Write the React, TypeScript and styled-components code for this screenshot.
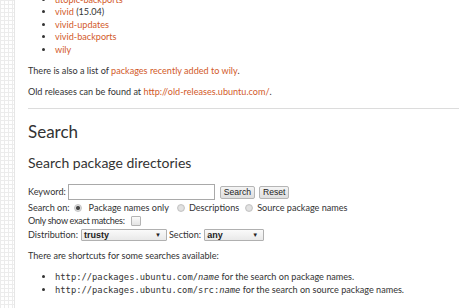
import React from "react";
import styled, { createGlobalStyle } from "styled-components";

const Global = createGlobalStyle`
  html, body { margin: 0; padding: 0; background: #fff; }
  body { font-family: Lato, "Open Sans", sans-serif; color: #333; overflow: hidden; }
`;

const Page = styled.div`
  display: flex;
  width: 459px;
  height: 308px;
  overflow: hidden;
`;

const Strip = styled.div`
  flex: 0 0 14px;
  border-right: 1px solid #e6e6e6;
  background-color: #fff;
  background-image:
    linear-gradient(to right, #ececec 1px, transparent 1px),
    linear-gradient(to bottom, #ececec 1px, transparent 1px);
  background-size: 4px 4px;
`;

const Main = styled.div`
  flex: 1;
  padding-left: 13px;
  margin-top: -6px;
  font-size: 9.1px;
  line-height: 12.4px;
`;

const List = styled.ul`
  margin: 0 0 9px 0;
  padding-left: 27px;
  list-style: disc;
`;

const Item = styled.li`
  line-height: 12.4px;
`;

const Link = styled.a`
  color: #d25a2a;
  text-decoration: none;
`;

const Para = styled.p`
  margin: 0 0 9px 0;
`;

const Rule = styled.hr`
  border: 0;
  border-top: 1px solid #dcdcdc;
  margin: 8px -20px 0 0;
`;

const H2 = styled.h2`
  font-weight: 400;
  font-size: 17px;
  line-height: 22px;
  margin: 12px 0 0 0;
  color: #333;
`;

const H3 = styled.h3`
  font-weight: 400;
  font-size: 14px;
  line-height: 18px;
  margin: 11px 0 0 0;
  color: #333;
`;

const Form = styled.form`
  margin-top: 12px;
  display: flex;
  flex-direction: column;
`;

const Row = styled.div<{ $h?: number }>`
  display: flex;
  align-items: center;
  height: ${(p) => p.$h ?? 14}px;
  white-space: nowrap;
`;

const Label = styled.span<{ $gap?: number; $tight?: boolean }>`
  margin-right: ${(p) => p.$gap ?? 2}px;
  letter-spacing: ${(p) => (p.$tight ? "-0.3px" : "0")};
`;

const TextInput = styled.input`
  width: 147px;
  height: 16px;
  box-sizing: border-box;
  border: 1px solid #a9a9a9;
  margin: 0 5px 0 0;
  padding: 0;
`;

const Button = styled.button`
  font-family: "Liberation Sans", Arial, sans-serif;
  font-size: 8.6px;
  height: 13px;
  padding: 0 3px;
  margin: 0 4px 0 0;
  border: 1px solid #b5b5b5;
  border-radius: 2px;
  background: linear-gradient(#f4f4f4, #dedede);
  color: #222;
  line-height: 11px;
`;

const Radio = styled.span<{ $on?: boolean; $ml: number; $mr: number }>`
  display: inline-block;
  width: 8px;
  height: 8px;
  border-radius: 50%;
  margin: 0 ${(p) => p.$mr}px 0 ${(p) => p.$ml}px;
  background: radial-gradient(circle, ${(p) => (p.$on ? "#444 0 1.5px, #ddd 2.5px" : "#e2e2e2 0 2px, #cfcfcf 4px")});
  border: 1px solid #c4c4c4;
  box-sizing: border-box;
`;

const Check = styled.span`
  display: inline-block;
  width: 8px;
  height: 8px;
  border: 1px solid #b4b4b4;
  border-radius: 1px;
  background: linear-gradient(#fbfbfb, #e4e4e4);
  margin-left: 4px;
`;

const Select = styled.span<{ $w: number }>`
  display: inline-flex;
  align-items: center;
  justify-content: space-between;
  box-sizing: border-box;
  width: ${(p) => p.$w}px;
  height: 12px;
  padding: 0 5px 0 2px;
  border: 1px solid #b0b0b0;
  border-radius: 1px;
  background: linear-gradient(#fafafa, #e9e9e9);
  font-family: "Liberation Sans", Arial, sans-serif;
  font-size: 9px;
  font-weight: bold;
  color: #222;
  margin: 0 2px 0 1px;
`;

const Arrow = styled.span`
  font-size: 6px;
  color: #222;
`;

const Shortcuts = styled.p`
  margin: 8px 0 0 0;
`;

const CodeList = styled.ul`
  margin: 9px 0 0 0;
  padding-left: 27px;
  line-height: 13.4px;
`;

const Code = styled.code`
  font-family: "DejaVu Sans Mono", monospace;
  font-size: 8.8px;
`;

export default function App() {
  return (
    <>
      <Global />
      <Page>
        <Strip />
        <Main>
          <List>
            <Item><Link href="#">utopic-backports</Link></Item>
            <Item><Link href="#">vivid</Link> (15.04)</Item>
            <Item><Link href="#">vivid-updates</Link></Item>
            <Item><Link href="#">vivid-backports</Link></Item>
            <Item><Link href="#">wily</Link></Item>
          </List>
          <Para>There is also a list of <Link href="#">packages recently added to wily</Link>.</Para>
          <Para>Old releases can be found at <Link href="#">http://old-releases.ubuntu.com/</Link>.</Para>
          <Rule />
          <H2>Search</H2>
          <H3>Search package directories</H3>
          <Form>
            <Row $h={17}>
              <Label>Keyword:</Label>
              <TextInput type="text" />
              <Button type="button">Search</Button>
              <Button type="button">Reset</Button>
            </Row>
            <Row $h={14}>
              <Label>Search on:</Label>
              <Radio $on $ml={2} $mr={7} />
              <Label>Package names only</Label>
              <Radio $ml={6} $mr={4} />
              <Label>Descriptions</Label>
              <Radio $ml={4} $mr={4} />
              <Label>Source package names</Label>
            </Row>
            <Row $h={13}>
              <Label $tight>Only show exact matches:</Label>
              <Check />
            </Row>
            <Row $h={14}>
              <Label>Distribution:</Label>
              <Select $w={86}>trusty<Arrow>▼</Arrow></Select>
              <Label>Section:</Label>
              <Select $w={60}>any<Arrow>▼</Arrow></Select>
            </Row>
          </Form>
          <Shortcuts>There are shortcuts for some searches available:</Shortcuts>
          <CodeList>
            <Item><Code>http://packages.ubuntu.com/<i>name</i></Code> for the search on package names.</Item>
            <Item><Code>http://packages.ubuntu.com/src:<i>name</i></Code> for the search on source package names.</Item>
          </CodeList>
        </Main>
      </Page>
    </>
  );
}
